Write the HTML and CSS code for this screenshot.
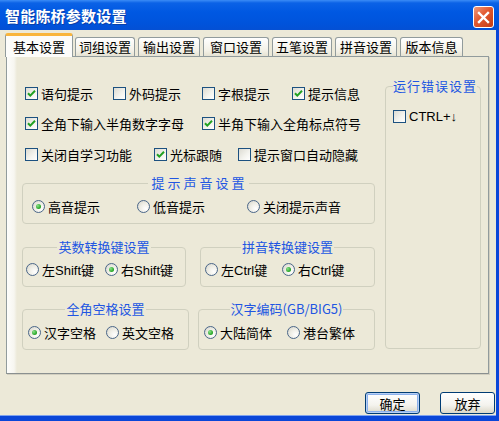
FILE: index.html
```html
<!DOCTYPE html>
<html lang="zh-CN">
<head>
    <meta charset="UTF-8">
    <title>智能陈桥参数设置</title>
    <link rel="stylesheet" href="styles.css">
</head>
<body>
<div class="window">
    <div class="titlebar">
        <span class="title">智能陈桥参数设置</span>
        <span class="close">
            <svg width="13" height="13" viewBox="0 0 13 13"><path d="M2 2 L11 11 M11 2 L2 11" stroke="#fff" stroke-width="2.4" stroke-linecap="square"/></svg>
        </span>
    </div>

    <div class="client">
        <div class="tabs">
            <div class="tab active">基本设置</div>
            <div class="tab">词组设置</div>
            <div class="tab w62">输出设置</div>
            <div class="tab w66">窗口设置</div>
            <div class="tab">五笔设置</div>
            <div class="tab w62">拼音设置</div>
            <div class="tab w63">版本信息</div>
        </div>

        <div class="panel">
            <div class="left">
                <div class="row row-a">
                    <label class="check on"><i class="box"></i>语句提示</label>
                    <label class="check"><i class="box"></i>外码提示</label>
                    <label class="check"><i class="box"></i>字根提示</label>
                    <label class="check on"><i class="box"></i>提示信息</label>
                </div>
                <div class="row row-b">
                    <label class="check on"><i class="box"></i>全角下输入半角数字字母</label>
                    <label class="check on"><i class="box"></i>半角下输入全角标点符号</label>
                </div>
                <div class="row row-c">
                    <label class="check"><i class="box"></i>关闭自学习功能</label>
                    <label class="check on"><i class="box"></i>光标跟随</label>
                    <label class="check"><i class="box"></i>提示窗口自动隐藏</label>
                </div>

                <fieldset class="group sound">
                    <legend class="spaced">提示声音设置</legend>
                    <div class="opts">
                        <label class="radio on"><i class="dot"></i>高音提示</label>
                        <label class="radio"><i class="dot"></i>低音提示</label>
                        <label class="radio"><i class="dot"></i>关闭提示声音</label>
                    </div>
                </fieldset>

                <div class="pair pair-1">
                    <fieldset class="group shift">
                        <legend>英数转换键设置</legend>
                        <div class="opts">
                            <label class="radio"><i class="dot"></i>左Shift键</label>
                            <label class="radio on"><i class="dot"></i>右Shift键</label>
                        </div>
                    </fieldset>
                    <fieldset class="group ctrl">
                        <legend>拼音转换键设置</legend>
                        <div class="opts">
                            <label class="radio"><i class="dot"></i>左Ctrl键</label>
                            <label class="radio on"><i class="dot"></i>右Ctrl键</label>
                        </div>
                    </fieldset>
                </div>

                <div class="pair pair-2">
                    <fieldset class="group space">
                        <legend>全角空格设置</legend>
                        <div class="opts">
                            <label class="radio on"><i class="dot"></i>汉字空格</label>
                            <label class="radio"><i class="dot"></i>英文空格</label>
                        </div>
                    </fieldset>
                    <fieldset class="group code">
                        <legend>汉字编码(GB/BIG5)</legend>
                        <div class="opts">
                            <label class="radio on"><i class="dot"></i>大陆简体</label>
                            <label class="radio"><i class="dot"></i>港台繁体</label>
                        </div>
                    </fieldset>
                </div>
            </div>

            <fieldset class="group errors">
                <legend class="wide-legend">运行错误设置</legend>
                <label class="check"><i class="box"></i>CTRL+↓</label>
            </fieldset>
        </div>

        <div class="actions">
            <button class="btn default">确定</button>
            <button class="btn">放弃</button>
        </div>
    </div>
</div>
</body>
</html>
```

FILE: styles.css
```css
* {
    box-sizing: border-box;
}

body {
    margin: 0;
    background: #ece9d8;
    font-family: "Liberation Sans", "Noto Sans CJK SC", sans-serif;
    font-size: 13px;
    color: #000;
}

.window {
    width: 499px;
    height: 421px;
    background: #ece9d8;
}

/* title bar */
.titlebar {
    height: 30px;
    display: flex;
    justify-content: space-between;
    align-items: flex-start;
    background: linear-gradient(#3b8cf6 0, #0b62e6 3px, #0058e2 40%, #0053db 80%, #0450d4 100%);
}
.titlebar .title {
    padding: 6px 0 0 5px;
    color: #fff;
    font-family: "Noto Sans CJK SC", sans-serif;
    font-weight: 700;
    font-size: 15px;
    line-height: 19px;
    letter-spacing: 0.2px;
    text-shadow: 1px 1px 0 #0a3fa8;
}
.titlebar .close {
    margin: 6px 5px 0 0;
    width: 21px;
    height: 22px;
    display: flex;
    align-items: center;
    justify-content: center;
    border: 1px solid #fff;
    border-radius: 3px;
    background: linear-gradient(135deg, #f09a7c 0, #e2582f 45%, #c43c14 100%);
}

/* client area */
.client {
    height: 391px;
    padding-top: 3px;
    border-right: 3px solid #0a46d8;
    border-bottom: 5px solid #0a46d8;
    box-shadow: inset 0 -1px 0 #7ea2ee;
}

.tabs {
    display: flex;
    align-items: flex-end;
    height: 23px;
    padding-left: 5px;
}
.tab {
    width: 60px;
    height: 19px;
    margin-left: 3px;
    text-align: center;
    line-height: 18px;
    font-family: "Noto Sans CJK SC", sans-serif;
    border: 1px solid #919b9c;
    border-bottom: 0;
    border-radius: 3px 3px 0 0;
    background: linear-gradient(#ffffff, #f3f1e7 70%, #e6e3d3);
}
.tab.w62 {
    width: 62px;
}
.tab.w63 {
    width: 63px;
}
.tab.w66 {
    width: 66px;
}
.tab:nth-child(2) {
    margin-left: 2px;
}
.tab.active {
    position: relative;
    z-index: 1;
    width: 68px;
    height: 24px;
    margin: 0 0 -1px 0;
    line-height: 21px;
    border-top: 3px solid #f9b53c;
    background: #fcfcfa;
}

.panel {
    width: 483px;
    height: 318px;
    margin-left: 6px;
    padding: 22px 6px 0 15px;
    display: grid;
    grid-template-columns: 353px 96px;
    column-gap: 10px;
    align-items: start;
    border: 1px solid #919b9c;
    border-bottom-color: #8a9090;
    background: linear-gradient(to right, #fdfdfb 0, #f7f6f0 7px, #ece9d8 10px);
    box-shadow: 1px 1px 0 #d2cfc0;
}

.left {
    display: flex;
    flex-direction: column;
}

.row {
    display: grid;
    height: 20px;
    padding-left: 3px;
    margin-top: 4px;
}
.row-a {
    grid-template-columns: 88px 89px 90px auto;
}
.row-b {
    margin-top: 10px;
    grid-template-columns: 177px auto;
}
.row-c {
    margin-top: 11px;
    grid-template-columns: 129px 84px auto;
}

/* checkbox / radio */
.check, .radio {
    display: flex;
    align-items: center;
    height: 20px;
    white-space: nowrap;
}
.check .box {
    width: 13px;
    height: 13px;
    margin-right: 3px;
    flex: none;
    border: 1px solid #1c5180;
    background: linear-gradient(135deg, #dcdbd2 0, #f4f4ef 60%, #ffffff 100%);
}
.check.on .box {
    background: url("data:image/svg+xml,%3Csvg xmlns='http://www.w3.org/2000/svg' width='11' height='11'%3E%3Cpath d='M2 5.2 L4.3 7.6 L9 2.8' fill='none' stroke='%2321a121' stroke-width='2'/%3E%3C/svg%3E") no-repeat center,
                linear-gradient(135deg, #dcdbd2 0, #f4f4ef 60%, #ffffff 100%);
}
.radio .dot {
    width: 13px;
    height: 13px;
    margin-right: 3px;
    flex: none;
    border: 1px solid #4a6689;
    border-radius: 50%;
    background: radial-gradient(circle at 70% 70%, #ffffff 0, #eeede5 50%, #d3d2c8 100%);
    display: flex;
    align-items: center;
    justify-content: center;
}
.radio.on .dot::after {
    content: "";
    width: 5px;
    height: 5px;
    border-radius: 50%;
    background: radial-gradient(circle at 35% 35%, #8ae28a 0, #21a121 70%);
}

/* group boxes */
.group {
    margin: 0;
    padding: 0;
    border: 1px solid #d0d0bf;
    border-radius: 4px;
    min-width: 0;
}
.group legend {
    margin: 0 auto;
    padding: 0 1px;
    color: #2156e2;
    font-family: "Noto Sans CJK SC", sans-serif;
    line-height: 14px;
    white-space: nowrap;
}
.group legend.spaced {
    letter-spacing: 3px;
    padding-left: 3px;
}
.group legend.wide-legend {
    margin: 0 0 0 7px;
    padding: 0;
    letter-spacing: 1px;
}
.opts {
    display: grid;
}

.sound {
    margin-top: 12px;
    height: 48px;
}
.sound .opts {
    padding: 6px 0 0 9px;
    grid-template-columns: 105px 110px auto;
}

.pair {
    display: grid;
    align-items: start;
}
.pair-1 {
    margin-top: 16px;
    grid-template-columns: 164px 175px;
    column-gap: 14px;
}
.pair-1 .group {
    height: 47px;
}
.pair-1 .opts {
    padding-top: 5px;
}
.shift .opts {
    padding-left: 3px;
    grid-template-columns: 79px auto;
}
.ctrl .opts {
    padding-left: 4px;
    grid-template-columns: 77px auto;
}

.pair-2 {
    margin-top: 15px;
    grid-template-columns: 167px 177px;
    column-gap: 9px;
}
.pair-2 .group {
    height: 48px;
}
.pair-2 .opts {
    padding-top: 6px;
}
.space .opts {
    padding-left: 5px;
    grid-template-columns: 78px auto;
}
.code .opts {
    padding-left: 5px;
    grid-template-columns: 83px auto;
}

.errors {
    height: 270px;
}
.errors .check {
    margin: 13px 0 0 7px;
}

/* buttons */
.actions {
    display: flex;
    justify-content: flex-end;
    gap: 20px;
    padding: 18px 1px 0 0;
}
.btn {
    width: 55px;
    height: 22px;
    padding: 0;
    font-family: "Noto Sans CJK SC", sans-serif;
    font-size: 13px;
    color: #000;
    border: 1px solid #003c74;
    border-radius: 3px;
    background: linear-gradient(#ffffff 0, #f4f3ee 60%, #dcd8c8 100%);
}
.btn.default {
    box-shadow: inset 0 0 0 1px #b8d0f4, inset 0 0 0 2px #8bb0ec;
}
```
